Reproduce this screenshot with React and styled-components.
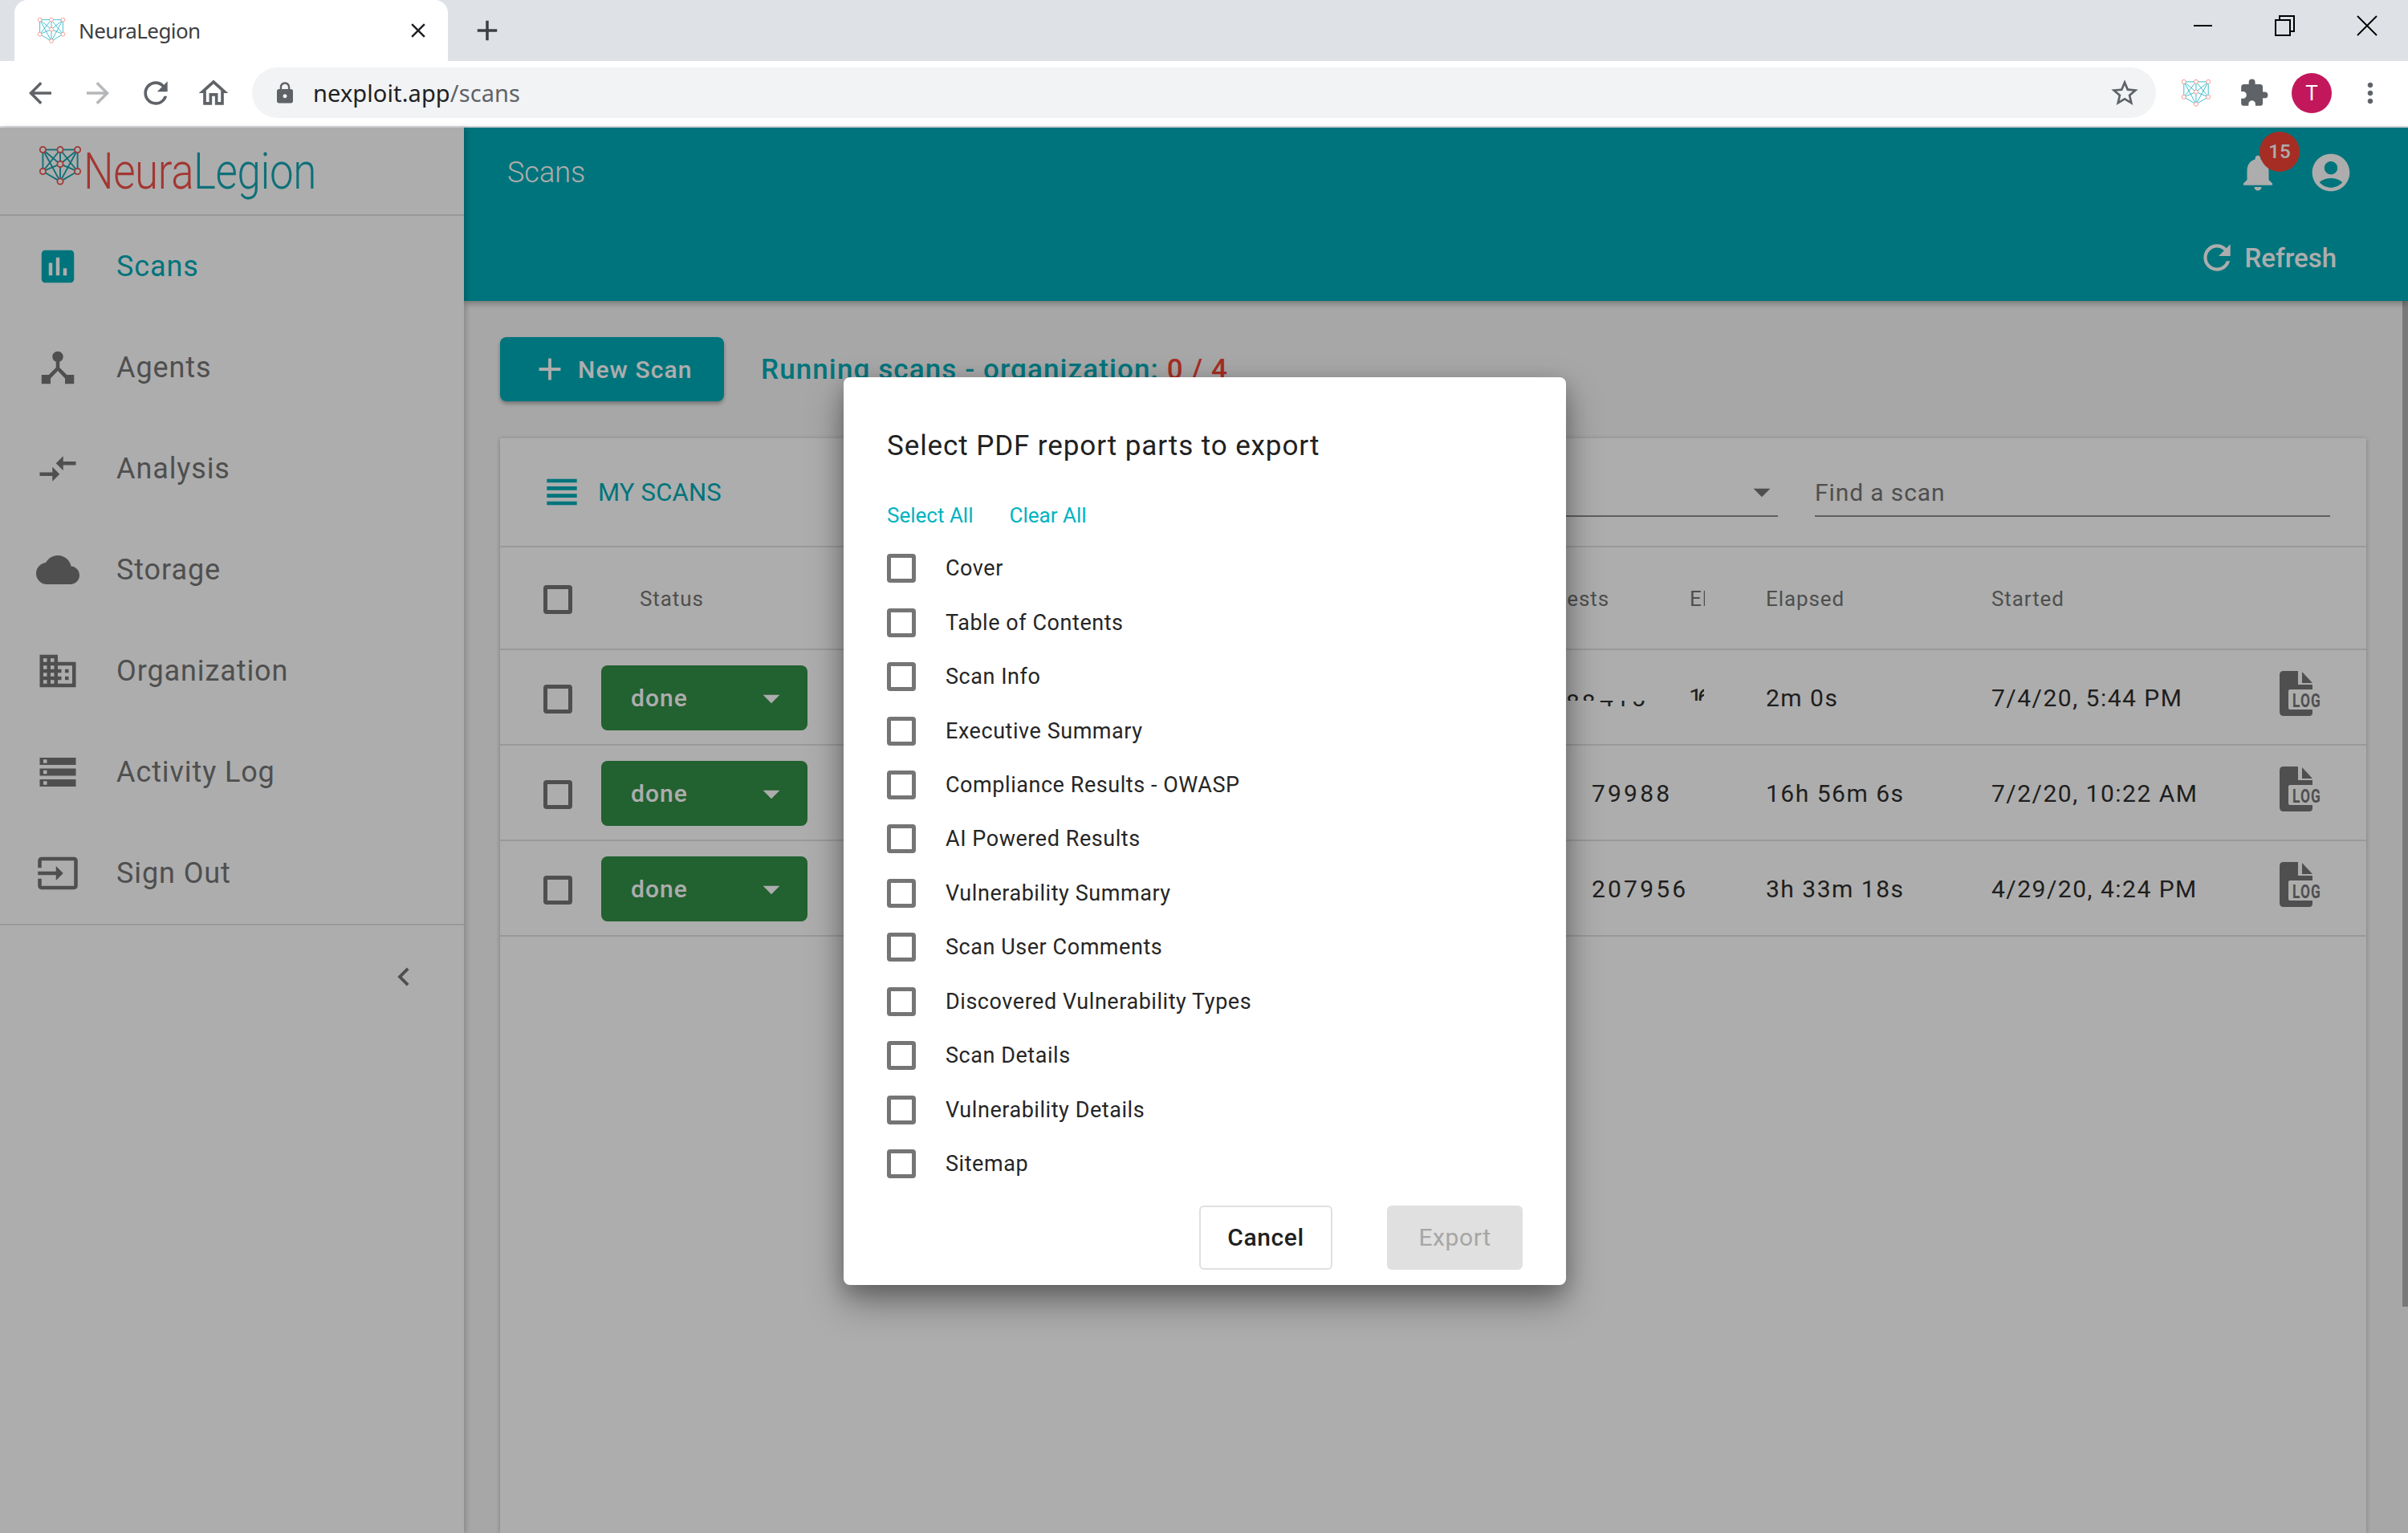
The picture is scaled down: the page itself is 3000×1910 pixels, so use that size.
import React from 'react';
import styled, { createGlobalStyle } from 'styled-components';
import {
  MdAdd,
  MdArrowBack,
  MdArrowDropDown,
  MdArrowForward,
  MdAssessment,
  MdBusiness,
  MdChevronLeft,
  MdClose,
  MdCloud,
  MdCompareArrows,
  MdDeviceHub,
  MdExtension,
  MdInput,
  MdLock,
  MdMoreVert,
  MdNotifications,
  MdAccountCircle,
  MdOutlineHome,
  MdRefresh,
  MdStarBorder,
  MdStorage,
  MdViewHeadline,
} from 'react-icons/md';

const color = {
  teal: '#00abb7',
  link: '#00b3c2',
  grey: '#757575',
  ink: '#2e2e2e',
  line: '#e2e2e2',
  red: '#f44336',
  green: '#338f47',
};

const font = `Roboto, 'Noto Sans', sans-serif`;

const GlobalStyle = createGlobalStyle`
  html, body {
    margin: 0;
    height: 1910px;
    overflow: hidden;
    background: #fff;
    font-family: ${font};
  }
  * { box-sizing: border-box; }
`;

const Window = styled.div`
  display: flex;
  flex-direction: column;
  width: 3000px;
  height: 1910px;
`;

/* browser chrome */
const TabStrip = styled.div`
  align-items: flex-end;
  background: #dee1e6;
  display: flex;
  flex: none;
  height: 76px;
  padding-left: 18px;
`;

const Tab = styled.div`
  align-items: center;
  background: #fff;
  border-radius: 16px 16px 0 0;
  color: #3c4043;
  display: flex;
  font-family: 'Noto Sans', sans-serif;
  font-size: 26px;
  height: 76px;
  letter-spacing: -0.6px;
  padding: 0 22px 0 28px;
  width: 540px;
  span { margin-left: 16px; flex: 1; }
`;

const NewTab = styled.div`
  align-items: center;
  color: #3c4043;
  display: flex;
  height: 76px;
  margin-left: 28px;
`;

const WindowControls = styled.div`
  align-items: center;
  display: flex;
  gap: 76px;
  height: 64px;
  margin-left: auto;
  margin-bottom: 12px;
  padding-right: 38px;
`;

const Toolbar = styled.div`
  align-items: center;
  background: #fff;
  border-bottom: 2px solid #dadce0;
  display: flex;
  flex: none;
  height: 83px;
  padding: 0 24px 2px 26px;
`;

const NavButton = styled.div`
  align-items: center;
  color: ${(p) => (p.$off ? '#b5b7ba' : '#5f6368')};
  display: flex;
  justify-content: center;
  margin-right: 24px;
  width: 48px;
`;

const Omnibox = styled.div`
  align-items: center;
  background: #f1f3f4;
  border-radius: 32px;
  color: #5f6368;
  display: flex;
  font-family: 'Noto Sans', sans-serif;
  font-size: 29px;
  height: 63px;
  letter-spacing: 0.1px;
  padding: 0 19px 0 26px;
  width: 2372px;
  b { color: #202124; font-weight: 400; margin-left: 20px; }
  svg:last-child { margin-left: auto; color: #5f6368; }
`;

const ToolbarIcons = styled.div`
  align-items: center;
  display: flex;
  margin-left: 31px;
  gap: 28px;
`;

const PuzzleIcon = styled(MdExtension)`
  color: #5f6368;
  margin-left: 6px;
`;

const Avatar = styled.div`
  align-items: center;
  background: #c2185b;
  border-radius: 50%;
  color: #fff;
  display: flex;
  font-size: 26px;
  height: 50px;
  justify-content: center;
  width: 50px;
`;

/* app */
const Viewport = styled.div`
  display: flex;
  flex: 1;
  min-height: 0;
  position: relative;
`;

const Sidebar = styled.aside`
  background: #fff;
  box-shadow: 3px 0 6px rgba(0, 0, 0, 0.18);
  display: flex;
  flex: none;
  flex-direction: column;
  position: relative;
  width: 578px;
  z-index: 2;
`;

const LogoBar = styled.div`
  align-items: flex-start;
  border-bottom: 2px solid ${color.line};
  display: flex;
  flex: none;
  height: 110px;
  padding: 22px 0 0 48px;
`;

const LogoText = styled.div`
  filter: blur(0.5px);
  font-size: 63px;
  font-weight: 300;
  letter-spacing: -0.5px;
  line-height: 66px;
  margin-left: 2px;
  transform: scaleX(0.84);
  transform-origin: left center;
  white-space: nowrap;
  i { color: #f0524b; font-style: normal; }
  b { color: #16a5b3; font-weight: 300; }
`;

const NavList = styled.nav`
  border-bottom: 2px solid ${color.line};
  display: flex;
  flex-direction: column;
`;

const NavItem = styled.div`
  align-items: center;
  color: ${(p) => (p.$active ? color.teal : color.grey)};
  display: flex;
  font-size: 36px;
  height: 126px;
  letter-spacing: 0.9px;
  svg { flex: none; margin-left: 45px; margin-right: 46px; }
`;

const Collapse = styled.div`
  align-items: center;
  color: ${color.grey};
  display: flex;
  height: 128px;
  justify-content: flex-end;
  padding-right: 52px;
`;

const Main = styled.main`
  background: #f7f7f7;
  display: flex;
  flex: 1;
  flex-direction: column;
  min-width: 0;
  position: relative;
`;

const AppHeader = styled.header`
  background: ${color.teal};
  box-shadow: 0 3px 8px rgba(0, 0, 0, 0.3);
  color: #fff;
  display: flex;
  flex: none;
  flex-direction: column;
  height: 216px;
  padding: 0 54px;
  z-index: 1;
`;

const HeaderTop = styled.div`
  align-items: center;
  display: flex;
  font-size: 36px;
  font-weight: 300;
  height: 112px;
  justify-content: space-between;
`;

const HeaderIcons = styled.div`
  align-items: center;
  display: flex;
  gap: 36px;
  margin-right: 14px;
  position: relative;
`;

const Badge = styled.span`
  align-items: center;
  background: ${color.red};
  border-radius: 50%;
  color: #fff;
  display: flex;
  font-size: 24px;
  font-weight: 500;
  height: 50px;
  justify-content: center;
  left: 29px;
  position: absolute;
  top: -23px;
  width: 50px;
`;

const RefreshRow = styled.div`
  align-items: center;
  display: flex;
  font-size: 33px;
  font-weight: 500;
  gap: 10px;
  height: 66px;
  justify-content: flex-end;
  margin-top: 17px;
  margin-right: 35px;
`;

const Content = styled.div`
  display: flex;
  flex: 1;
  flex-direction: column;
  min-height: 0;
  padding: 45px 52px 0 45px;
`;

const ActionRow = styled.div`
  align-items: center;
  display: flex;
  flex: none;
  gap: 46px;
  height: 80px;
`;

const PrimaryButton = styled.div`
  align-items: center;
  background: ${color.teal};
  border-radius: 8px;
  box-shadow: 0 3px 5px rgba(0, 0, 0, 0.3);
  color: #fff;
  display: flex;
  font-size: 30px;
  font-weight: 500;
  gap: 12px;
  height: 80px;
  letter-spacing: 1.1px;
  padding-left: 39px;
  width: 279px;
`;

const RunningLabel = styled.div`
  color: ${color.teal};
  font-size: 35px;
  font-weight: 500;
  letter-spacing: 1.1px;
  span { color: ${color.red}; }
`;

const Card = styled.section`
  background: #fff;
  box-shadow: 0 1px 6px rgba(0, 0, 0, 0.25);
  display: flex;
  flex: 1;
  flex-direction: column;
  margin-top: 46px;
`;

const CardTop = styled.div`
  align-items: center;
  border-bottom: 2px solid ${color.line};
  display: flex;
  flex: none;
  height: 136px;
  padding: 0 45px 0 49px;
`;

const CardTitle = styled.div`
  align-items: center;
  color: ${color.teal};
  display: flex;
  font-size: 31px;
  gap: 17px;
  letter-spacing: 0.2px;
`;

const SelectField = styled.div`
  align-items: center;
  align-self: flex-start;
  border-bottom: 2px solid #8c8c8c;
  color: ${color.grey};
  display: flex;
  height: 70px;
  justify-content: flex-end;
  margin-left: auto;
  margin-top: 28px;
  padding: 10px 0 0;
  width: 500px;
  svg { margin-right: -5px; }
`;

const FindField = styled.div`
  align-items: center;
  align-self: flex-start;
  border-bottom: 2px solid #8c8c8c;
  color: ${color.grey};
  display: flex;
  font-size: 30px;
  height: 70px;
  letter-spacing: 0.9px;
  margin-left: 46px;
  margin-top: 28px;
  padding-top: 10px;
  width: 642px;
`;

const HeadRow = styled.div`
  align-items: center;
  border-bottom: 2px solid ${color.line};
  color: ${color.grey};
  display: grid;
  flex: none;
  font-size: 26px;
  grid-template-columns: 126px 1256px 100px 95px 281px 1fr;
  height: 128px;
  letter-spacing: 0.9px;
  padding-top: 2px;
`;

const HeadLabels = styled.div`
  display: flex;
  justify-content: space-between;
  padding-left: 48px;
`;

const ClippedHead = styled.div`
  overflow: hidden;
  width: 19px;
`;

const BodyRow = styled.div`
  align-items: center;
  border-bottom: 2px solid ${color.line};
  color: ${color.ink};
  display: grid;
  flex: none;
  font-size: 30px;
  grid-template-columns: 126px 1234px 217px 281px 359px 1fr;
  height: 119px;
  letter-spacing: 1.5px;
  padding-top: 2px;
`;

const CheckCell = styled.div`
  padding: 2px 0 0 54px;
`;

const StatusCell = styled.div`
  position: relative;
`;

const RequestCount = styled.span`
  letter-spacing: 3.2px;
`;

const LogCell = styled.div`
  display: flex;
  padding-bottom: 12px;
`;

const Glitch = styled.span`
  height: ${(p) => p.$h}px;
  left: ${(p) => p.$x}px;
  letter-spacing: ${(p) => p.$ls}px;
  line-height: 36px;
  overflow: hidden;
  position: absolute;
  top: ${(p) => p.$y}px;
  white-space: nowrap;
  width: ${(p) => p.$w}px;
  em {
    display: block;
    font-style: normal;
    margin-top: ${(p) => p.$shift}px;
  }
`;

const StatusPill = styled.div`
  align-items: center;
  background: ${color.green};
  border-radius: 8px;
  color: #fff;
  display: flex;
  font-size: 30px;
  font-weight: 500;
  height: 81px;
  justify-content: space-between;
  letter-spacing: 1px;
  padding: 0 20px 0 37px;
  width: 257px;
`;

const Box = styled.span`
  border: 5px solid #757575;
  border-radius: 4px;
  display: block;
  flex: none;
  height: 36px;
  width: 36px;
`;

const Backdrop = styled.div`
  align-items: center;
  background: rgba(0, 0, 0, 0.32);
  display: flex;
  inset: 0;
  justify-content: center;
  position: absolute;
  z-index: 5;
`;

const Scrollbar = styled.div`
  background: #b3b3b3;
  height: 1253px;
  position: absolute;
  right: 0;
  top: 216px;
  width: 7px;
`;

const Dialog = styled.div`
  background: #fff;
  border-radius: 8px;
  box-shadow: 0 22px 46px rgba(0, 0, 0, 0.35), 0 8px 24px rgba(0, 0, 0, 0.2);
  color: ${color.ink};
  display: flex;
  flex-direction: column;
  height: 1131px;
  margin: 1px 0 0 2px;
  padding: 61px 54px 0;
  width: 900px;
`;

const DialogTitle = styled.div`
  color: #212121;
  font-size: 35px;
  height: 50px;
  letter-spacing: 0.9px;
  line-height: 50px;
`;

const LinkRow = styled.div`
  color: ${color.link};
  display: flex;
  font-size: 26px;
  gap: 45px;
  height: 40px;
  line-height: 40px;
  margin-top: 41px;
`;

const PartList = styled.div`
  display: grid;
  grid-auto-rows: 67.45px;
  margin-top: 13px;
`;

const PartRow = styled.div`
  align-items: center;
  color: #262626;
  display: flex;
  font-size: 27px;
  gap: 37px;
  letter-spacing: 0.55px;
`;

const DialogActions = styled.div`
  display: flex;
  gap: 68px;
  justify-content: flex-end;
  margin-top: 18px;
`;

const DialogButton = styled.div`
  align-items: center;
  background: ${(p) => (p.$disabled ? '#e0e0e0' : '#fff')};
  border: ${(p) => (p.$disabled ? 'none' : '2px solid #e0e0e0')};
  border-radius: 6px;
  color: ${(p) => (p.$disabled ? '#a6a6a6' : '#212121')};
  display: flex;
  font-size: 30px;
  font-weight: ${(p) => (p.$disabled ? 400 : 500)};
  height: 80px;
  justify-content: center;
  letter-spacing: 0.6px;
  width: ${(p) => p.$w}px;
`;

function NetworkMark({ size, line, node, w = 1.3 }) {
  const pts = [[6, 6], [30, 6], [54, 6], [30, 26], [6, 36], [54, 36], [30, 50]];
  const links = [[0, 1], [1, 2], [0, 3], [1, 3], [2, 3], [0, 4], [2, 5], [3, 4], [3, 5], [4, 6], [5, 6], [3, 6], [0, 6], [2, 6], [1, 4], [1, 5]];
  return (
    <svg width={size} height={size * 0.92} viewBox="0 0 60 55" style={{ flex: 'none' }}>
      {links.map(([a, b]) => (
        <line key={`${a}-${b}`} x1={pts[a][0]} y1={pts[a][1]} x2={pts[b][0]} y2={pts[b][1]} stroke={line} strokeWidth={w * 1.6} />
      ))}
      {pts.map(([x, y]) => (
        <circle key={`${x}-${y}`} cx={x} cy={y} r="4" fill="#fff" stroke={node} strokeWidth={w * 1.5} />
      ))}
    </svg>
  );
}

function LogFile() {
  return (
    <svg width="54" height="56" viewBox="0 0 54 56">
      <path d="M5 0H23V17H41V23H13Q11 23 11 25V46Q11 48 13 48H41V52Q41 56 37 56H5Q0 56 0 51V5Q0 0 5 0Z" fill="#757575" />
      <path d="M28 1L41 15H28Z" fill="#757575" />
      <text x="16" y="45" fontFamily="Roboto, sans-serif" fontWeight="700" fontSize="23" fill="#757575" textLength="36" lengthAdjust="spacingAndGlyphs">LOG</text>
    </svg>
  );
}

const navItems = [
  ['Scans', MdAssessment],
  ['Agents', MdDeviceHub],
  ['Analysis', MdCompareArrows],
  ['Storage', MdCloud],
  ['Organization', MdBusiness],
  ['Activity Log', MdStorage],
  ['Sign Out', MdInput],
];

const scans = [
  { requests: '', elapsed: '2m 0s', started: '7/4/20, 5:44 PM', glitch: true },
  { requests: '79988', elapsed: '16h 56m 6s', started: '7/2/20, 10:22 AM' },
  { requests: '207956', elapsed: '3h 33m 18s', started: '4/29/20, 4:24 PM' },
];

const parts = [
  'Cover',
  'Table of Contents',
  'Scan Info',
  'Executive Summary',
  'Compliance Results - OWASP',
  'AI Powered Results',
  'Vulnerability Summary',
  'Scan User Comments',
  'Discovered Vulnerability Types',
  'Scan Details',
  'Vulnerability Details',
  'Sitemap',
];

export default function App() {
  return (
    <Window>
      <GlobalStyle />
      <TabStrip>
        <Tab>
          <NetworkMark size={36} line="#2ab7c9" node="#f28b82" w={0.9} />
          <span>NeuraLegion</span>
          <MdClose size={30} color="#202124" />
        </Tab>
        <NewTab>
          <MdAdd size={42} />
        </NewTab>
        <WindowControls>
          <svg width="26" height="26" viewBox="0 0 26 26"><path d="M1 13H24" stroke="#000" strokeWidth="2" /></svg>
          <svg width="26" height="28" viewBox="0 0 26 28"><path d="M1 7H19V26H1ZM6 7V2H24V21H19" fill="none" stroke="#000" strokeWidth="2" /></svg>
          <svg width="26" height="28" viewBox="0 0 26 28"><path d="M1 2L25 26M25 2L1 26" stroke="#000" strokeWidth="1.8" /></svg>
        </WindowControls>
      </TabStrip>
      <Toolbar>
        <NavButton><MdArrowBack size={42} /></NavButton>
        <NavButton $off><MdArrowForward size={42} /></NavButton>
        <NavButton>
          <MdRefresh size={44} />
        </NavButton>
        <NavButton><MdOutlineHome size={44} /></NavButton>
        <Omnibox>
          <MdLock size={30} />
          <b>nexploit.app</b>/scans
          <MdStarBorder size={40} />
        </Omnibox>
        <ToolbarIcons>
          <NetworkMark size={38} line="#2ab7c9" node="#f28b82" w={0.9} />
          <PuzzleIcon size={38} />
          <Avatar>T</Avatar>
          <MdMoreVert size={40} color="#5f6368" />
        </ToolbarIcons>
      </Toolbar>
      <Viewport>
        <Sidebar>
          <LogoBar>
            <NetworkMark size={54} line="#1aa3b0" node="#ef5350" />
            <LogoText><i>Neura</i><b>Legion</b></LogoText>
          </LogoBar>
          <NavList>
            {navItems.map(([label, Icon], i) => (
              <NavItem key={label} $active={i === 0}>
                <Icon size={54} />
                {label}
              </NavItem>
            ))}
          </NavList>
          <Collapse><MdChevronLeft size={46} /></Collapse>
        </Sidebar>
        <Main>
          <AppHeader>
            <HeaderTop>
              Scans
              <HeaderIcons>
                <MdNotifications size={54} />
                <Badge>15</Badge>
                <MdAccountCircle size={56} />
              </HeaderIcons>
            </HeaderTop>
            <RefreshRow>
              <MdRefresh size={50} />
              Refresh
            </RefreshRow>
          </AppHeader>
          <Content>
            <ActionRow>
              <PrimaryButton><MdAdd size={46} />New Scan</PrimaryButton>
              <RunningLabel>Running scans - organization: <span>0 / 4</span></RunningLabel>
            </ActionRow>
            <Card>
              <CardTop>
                <CardTitle><MdViewHeadline size={56} />MY SCANS</CardTitle>
                <SelectField><MdArrowDropDown size={50} /></SelectField>
                <FindField>Find a scan</FindField>
              </CardTop>
              <HeadRow>
                <CheckCell><Box /></CheckCell>
                <HeadLabels><span>Status</span><span>Requests</span></HeadLabels>
                <span />
                <ClippedHead>Elapsed</ClippedHead>
                <span>Elapsed</span>
                <span>Started</span>
              </HeadRow>
              {scans.map((scan) => (
                <BodyRow key={scan.started}>
                  <CheckCell><Box /></CheckCell>
                  <StatusCell>
                    <StatusPill>done <MdArrowDropDown size={50} /></StatusPill>
                    {scan.glitch && (
                      <>
                        <Glitch $x={1202} $y={36} $w={37} $h={8} $shift={-7} $ls={3}><em>88</em></Glitch>
                        <Glitch $x={1244} $y={44} $w={60} $h={7} $shift={-21} $ls={3}><em>4155</em></Glitch>
                        <Glitch $x={1355} $y={29} $w={19} $h={15} $shift={-7} $ls={-6}><em>16</em></Glitch>
                      </>
                    )}
                  </StatusCell>
                  <RequestCount>{scan.requests}</RequestCount>
                  <span>{scan.elapsed}</span>
                  <span>{scan.started}</span>
                  <LogCell><LogFile /></LogCell>
                </BodyRow>
              ))}
            </Card>
          </Content>
          <Scrollbar />
        </Main>
        <Backdrop>
          <Dialog>
            <DialogTitle>Select PDF report parts to export</DialogTitle>
            <LinkRow><span>Select All</span><span>Clear All</span></LinkRow>
            <PartList>
              {parts.map((part) => (
                <PartRow key={part}><Box />{part}</PartRow>
              ))}
            </PartList>
            <DialogActions>
              <DialogButton $w={166}>Cancel</DialogButton>
              <DialogButton $w={169} $disabled>Export</DialogButton>
            </DialogActions>
          </Dialog>
        </Backdrop>
      </Viewport>
    </Window>
  );
}
